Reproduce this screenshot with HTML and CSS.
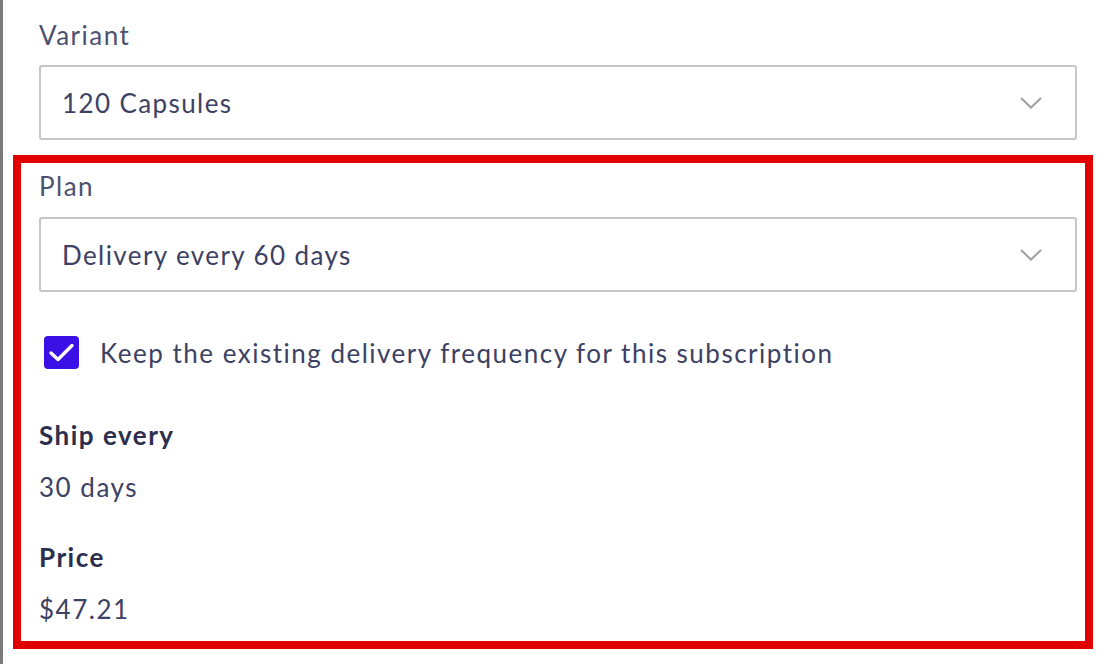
FILE: index.html
```html
<!DOCTYPE html>
<html lang="en">
<head>
    <meta charset="UTF-8">
    <meta name="viewport" content="width=device-width, initial-scale=1.0">
    <title>Edit subscription</title>
    <link rel="stylesheet" href="styles.css">
</head>
<body>
    <div class="panel">
        <div class="field">
            <label class="field-label" for="variantSelect">Variant</label>
            <div class="select" id="variantSelect">
                <span class="select-value">120 Capsules</span>
                <svg class="chevron" width="22" height="12" viewBox="0 0 22 12">
                    <path d="M1 1 L11 10.5 L21 1" />
                </svg>
            </div>
        </div>

        <div class="highlight">
            <div class="field">
                <label class="field-label" for="planSelect">Plan</label>
                <div class="select" id="planSelect">
                    <span class="select-value">Delivery every 60 days</span>
                    <svg class="chevron" width="22" height="12" viewBox="0 0 22 12">
                        <path d="M1 1 L11 10.5 L21 1" />
                    </svg>
                </div>
            </div>

            <label class="check-row">
                <span class="checkbox">
                    <svg width="27" height="21" viewBox="0 0 27 21">
                        <path d="M3 11 L10 17.5 L24 3.5" />
                    </svg>
                </span>
                <span class="check-text">Keep the existing delivery frequency for this subscription</span>
            </label>

            <div class="detail detail-first">
                <div class="detail-title">Ship every</div>
                <div class="detail-value">30 days</div>
            </div>

            <div class="detail">
                <div class="detail-title">Price</div>
                <div class="detail-value">$47.21</div>
            </div>
        </div>
    </div>
</body>
</html>
```

FILE: styles.css
```css
:root {
    --text-color: #3d4163;
    --label-color: #4d5170;
    --title-color: #2b2e4d;
    --border-color: #c6c6c6;
    --accent-color: #3b10e6;
    --highlight-color: #e00000;
}

body {
    margin: 0;
    background-color: #ffffff;
    font-family: Lato, 'Noto Sans', sans-serif;
    font-size: 26px;
    line-height: 30px;
    color: var(--text-color);
    letter-spacing: 1.5px;
    border-left: 3px solid #7a7a7a;
    min-height: 664px;
    box-sizing: border-box;
}

.panel {
    width: 1038px;
    padding: 20px 0 0 36px;
}

.field-label {
    display: block;
    color: var(--label-color);
    margin-bottom: 15px;
}

.select {
    height: 75px;
    border: 2px solid var(--border-color);
    border-radius: 3px;
    box-sizing: border-box;
    display: flex;
    align-items: center;
    justify-content: space-between;
    padding: 0 33px 0 21px;
    letter-spacing: 1.4px;
}

.chevron path {
    fill: none;
    stroke: #a0a0a0;
    stroke-width: 2;
}

.highlight {
    margin: 15px -16px 0 -26px;
    padding: 8px 8px 17px 18px;
    border: 8px solid var(--highlight-color);
}

.highlight .field-label {
    margin-bottom: 16px;
}

.check-row {
    display: flex;
    align-items: center;
    gap: 21px;
    margin-top: 44px;
    padding-left: 5px;
}

.checkbox {
    width: 35px;
    height: 33px;
    border-radius: 4px;
    background-color: var(--accent-color);
    display: flex;
    align-items: center;
    justify-content: center;
}

.checkbox path {
    fill: none;
    stroke: #ffffff;
    stroke-width: 3.4;
    stroke-linecap: round;
    stroke-linejoin: round;
}

.detail {
    margin-top: 40px;
}

.detail-first {
    margin-top: 51px;
}

.detail-title {
    font-weight: 700;
    color: var(--title-color);
    margin-bottom: 22px;
}
```
